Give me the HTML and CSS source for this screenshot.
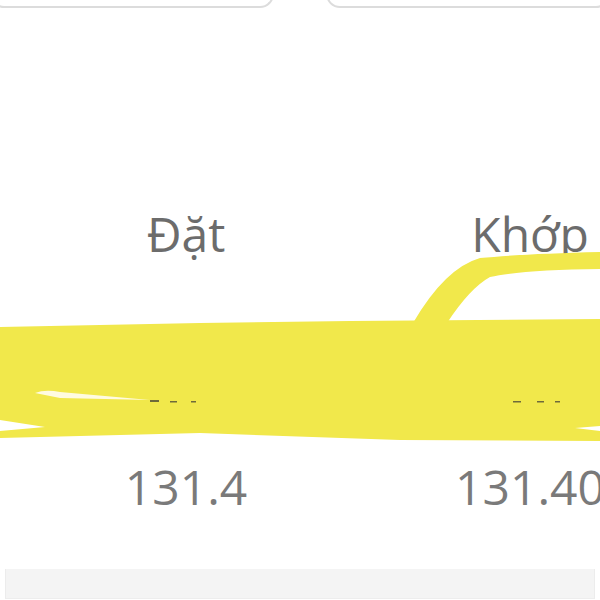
FILE: index.html
```html
<!DOCTYPE html>
<html lang="vi">
<head>
    <meta charset="UTF-8">
    <meta name="viewport" content="width=device-width, initial-scale=1.0">
    <title>Lệnh</title>
    <link rel="stylesheet" href="styles.css">
</head>
<body>
    <div class="screen">
        <div class="tabs">
            <div class="tab tab-left"></div>
            <div class="tab tab-right"></div>
        </div>

        <div class="row labels">
            <div class="col">Đặt</div>
            <div class="col">Khớp</div>
        </div>

        <div class="row values">
            <div class="col">131.4</div>
            <div class="col">131.40</div>
        </div>

        <div class="footer-bar"></div>

        <!-- marker scribble drawn over the screenshot -->
        <svg class="scribble" width="600" height="600" viewBox="0 0 600 600">
            <g fill="#f1e84b">
                <path d="M0 327 L200 323 L350 321 L600 319 L600 426 L575 428 L600 431 L600 441 L400 440 L200 433 L0 438 L0 431 L45 427 L0 420 Z"/>
                <path d="M413 323 Q445 268 480 258 Q520 254 600 252 L600 269 Q520 270 490 277 Q470 288 447 323 Z"/>
            </g>
            <path d="M35 393 Q45 389 60 392 L150 400 L60 398 Z" fill="#fffbe0"/>
            <g fill="#6e6a3a">
                <rect x="150" y="400" width="9" height="2"/>
                <rect x="170" y="401" width="7" height="1.5"/>
                <rect x="191" y="401" width="5" height="1.5"/>
                <rect x="513" y="401" width="8" height="1.5"/>
                <rect x="537" y="401" width="7" height="1.5"/>
                <rect x="555" y="401" width="5" height="1.5"/>
            </g>
        </svg>
    </div>
</body>
</html>
```

FILE: styles.css
```css
body {
    margin: 0;
    background: #fff;
    font-family: "Open Sans", "Liberation Sans", sans-serif;
}

.screen {
    position: relative;
    width: 600px;
    height: 600px;
    overflow: hidden;
}

.tabs {
    display: flex;
    justify-content: space-between;
    margin-top: -32px;
}
.tab {
    height: 38px;
    border: 2px solid #dcdcdc;
    border-top: none;
    border-radius: 0 0 14px 14px;
    background: #fff;
}
.tab-left {
    width: 280px;
    margin-left: -10px;
}
.tab-right {
    width: 280px;
    margin-right: -10px;
}

.row {
    display: flex;
    padding-left: 14px;
    color: #737373;
    font-size: 48px;
    line-height: 48px;
}
.col {
    flex: 0 0 344px;
    text-align: center;
    white-space: nowrap;
}
.labels {
    margin-top: 202px;
}
.labels .col {
    color: #6c6c6c;
}
.values {
    margin-top: 205px;
    color: #7a7a7a;
}

.footer-bar {
    margin: 58px 5px 0;
    height: 29px;
    background: #f4f4f4;
    border-left: 1px solid #ececec;
    border-right: 1px solid #ececec;
    border-bottom: 1px solid #ededed;
}

.scribble {
    position: absolute;
    top: 0;
    left: 0;
}
```
